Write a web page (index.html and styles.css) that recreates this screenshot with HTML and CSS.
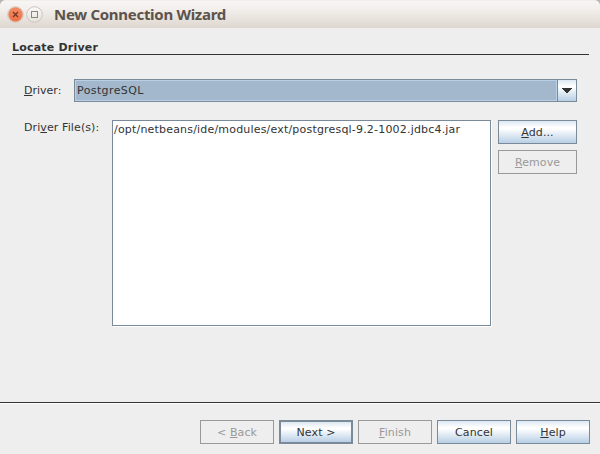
FILE: index.html
```html
<!DOCTYPE html>
<html lang="en">
<head>
<meta charset="utf-8">
<title>New Connection Wizard</title>
<link rel="stylesheet" href="styles.css">
</head>
<body>
<div class="window">
  <header class="titlebar">
    <svg class="controls" width="46" height="20" viewBox="0 0 46 20">
      <defs>
        <linearGradient id="close" x1="0" y1="0" x2="0" y2="1"><stop offset="0" stop-color="#f58c65"/><stop offset="1" stop-color="#ed7044"/></linearGradient>
        <linearGradient id="max" x1="0" y1="0" x2="0" y2="1"><stop offset="0" stop-color="#fbfaf9"/><stop offset="1" stop-color="#e6e1dc"/></linearGradient>
      </defs>
      <circle cx="8.5" cy="10.5" r="7.8" fill="#f4ece8" stroke="#cbbdb4" stroke-width=".8"/>
      <circle cx="8.5" cy="10.5" r="6.9" fill="url(#close)" stroke="#d9855f" stroke-width=".5"/>
      <path d="M6 8l5 5m0-5l-5 5" stroke="#6f3825" stroke-width="1.3"/>
      <circle cx="27.5" cy="10.5" r="7.8" fill="url(#max)" stroke="#c9c4bf"/>
      <rect x="24.5" y="7.5" width="6" height="6" fill="none" stroke="#8b8680"/>
    </svg>
    <h1 class="title">New Connection Wizard</h1>
  </header>
  <main class="content">
    <h2 class="heading">Locate Driver</h2>
    <div class="form">
      <div class="row driver-row">
        <label class="driver-label"><u>D</u>river:</label>
        <div class="combo">
          <span class="combo-value">PostgreSQL</span>
          <span class="combo-arrow"><svg width="10" height="5" viewBox="0 0 10 5" shape-rendering="crispEdges"><path d="M0 0h10v1H9v1H8v1H7v1H6v1H4V4H3V3H2V2H1V1H0z" fill="#333"/></svg></span>
        </div>
      </div>
      <div class="row files-row">
        <label class="files-label">Dri<u>v</u>er File(s):</label>
        <div class="list"><span class="path">/opt/netbeans/ide/modules/ext/postgresql-9.2-1002.jdbc4.jar</span></div>
        <div class="side">
          <button class="btn"><u>A</u>dd...</button>
          <button class="btn" disabled><u>R</u>emove</button>
        </div>
      </div>
    </div>
  </main>
  <footer class="footer">
    <button class="btn" disabled>&lt; <u>B</u>ack</button>
    <button class="btn default">Next &gt;</button>
    <button class="btn" disabled><u>F</u>inish</button>
    <button class="btn">Cancel</button>
    <button class="btn"><u>H</u>elp</button>
  </footer>
</div>
</body>
</html>
```
FILE: styles.css
```css
* { box-sizing: border-box; }
body { margin: 0; background: #b9b6b2; font: 11px/13px "DejaVu Sans", sans-serif; color: #333; }
.window { width: 600px; height: 454px; display: flex; flex-direction: column; background: #eee; border-radius: 6px 6px 0 0; overflow: hidden; }
.titlebar { height: 28px; flex: none; display: flex; align-items: center; padding-left: 7px; background: linear-gradient(#e9e6e3 0, #f8f6f4 1px, #f3f0ed 8px, #dfd7d0 28px); }
.controls { flex: none; }
.title { margin: 0 0 0 1px; font: bold 15px/20px "Noto Sans", sans-serif; letter-spacing: -.29px; color: #5c534c; white-space: nowrap; }
.content { flex: 1; padding: 13px 11px 0 12px; }
.heading { margin: 0; height: 14px; font-size: 11px; line-height: 13px; letter-spacing: .2px; border-bottom: 1px solid #333; white-space: nowrap; }
.form { padding: 24px 12px 0; }
.row { display: flex; }
u { text-decoration: underline 1px; text-underline-offset: 1px; text-decoration-skip-ink: none; }
.driver-label { width: 50px; padding-top: 5px; }
.combo { flex: 1; height: 23px; display: flex; border: 1px solid #7a8a99; }
.combo-value { flex: 1; padding: 3px 1px; background: #a3b8cc; border: 1px solid #b8cfe5; letter-spacing: .4px; }
.combo-arrow { width: 19px; border-left: 1px solid #7a8a99; display: flex; align-items: center; justify-content: center; background: linear-gradient(#dde8f3, #fff 30%, #b8cfe5); }
.files-row { margin-top: 18px; }
.files-label { width: 88px; padding-top: 1px; letter-spacing: .1px; white-space: nowrap; }
.list { width: 379px; height: 206px; padding: 2px 1px; background: #fff; border: 1px solid #7a8a99; box-shadow: 1px 1px #fff; white-space: nowrap; }
.path { letter-spacing: .19px; }
.side { margin-left: 7px; display: flex; flex-direction: column; gap: 6px; width: 79px; }
.btn { height: 24px; padding: 0; border: 1px solid #7a8a99; border-radius: 0; font: inherit; letter-spacing: .1px; color: #333; background: linear-gradient(#dde8f3, #fff 30%, #fff 35%, #b8cfe5); }
.btn:disabled { background: #eee; border-color: #999; color: #999; }
.footer { height: 52px; flex: none; display: flex; justify-content: flex-end; gap: 5px; padding: 17px 10px 0; border-top: 1px solid #333; box-shadow: inset 0 1px #fff; }
.footer .btn { width: 74px; }
.footer .default { border: 2px solid #7a8a99; }
```
